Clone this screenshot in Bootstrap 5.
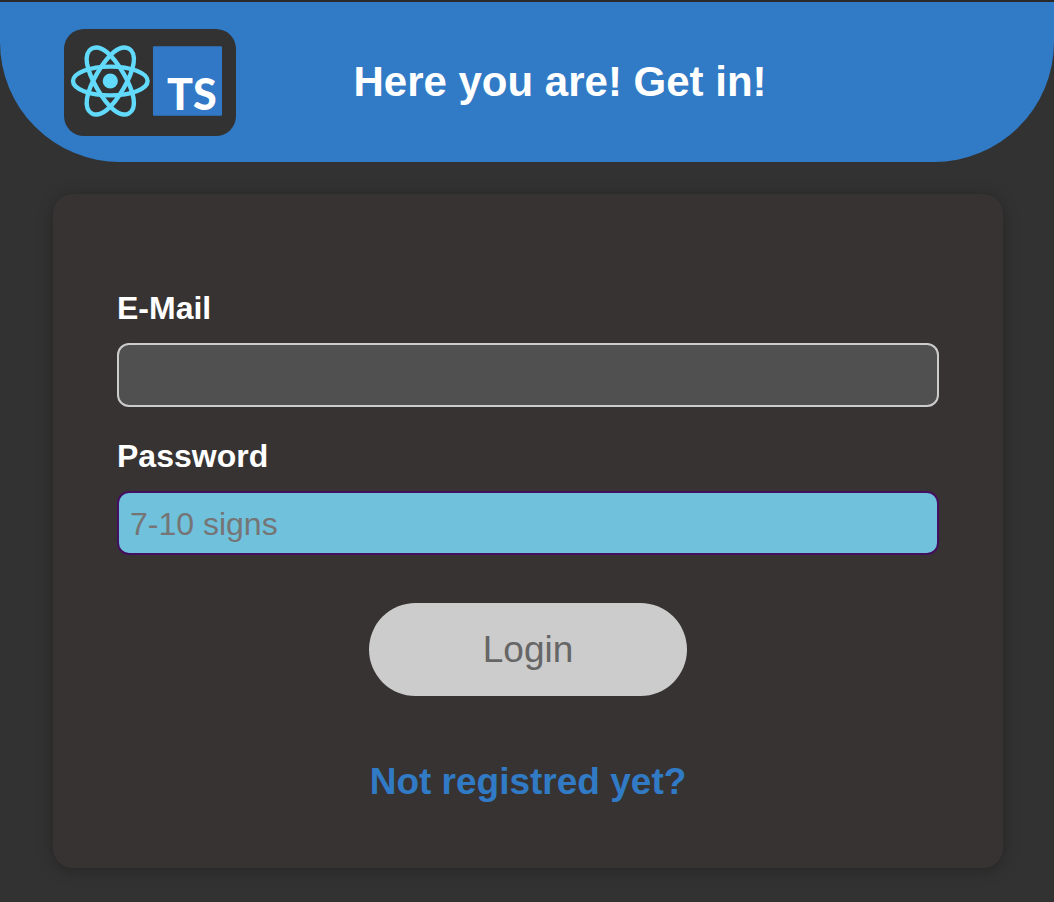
<!DOCTYPE html>
<html lang="en" data-bs-theme="dark">
<head>
<meta charset="utf-8">
<meta name="viewport" content="width=device-width, initial-scale=1">
<title>Login</title>
<link href="https://cdn.jsdelivr.net/npm/bootstrap@5.3.0/dist/css/bootstrap.min.css" rel="stylesheet">
<style>
  body { background: #323232; color: #fff; font-family: "Liberation Sans", Arial, sans-serif; }
  .site-header { background: #317bc6; border-radius: 0 0 120px 120px; min-height: 160px; padding: 0 170px 0 64px; }
  .top-line { height: 2px; background: #2a2a2a; }
  .brand { background: #323232; border-radius: 20px; line-height: 0; }
  .site-title { font-size: 42px; line-height: 48px; }
  .page-main { padding: 32px 51px 32px 53px; }
  .login-card { background: #373332; border: 0; border-radius: 20px; padding: 96px 64px 64px; box-shadow: 0 2px 16px rgba(0, 0, 0, .26); color: #fff; }
  .field-stack { display: grid; gap: 31px; }
  .field-label { font-size: 32px; line-height: 37px; margin-bottom: 16px; }
  .field { height: 64px; border: 2px solid #ccc; border-radius: 12px; background: #505050; color: #fff; font-size: 32px; line-height: 38px; padding: 12px 11px 10px; }
  .field:focus { background: #505050; color: #fff; }
  .field-invalid, .field-invalid:focus { background: #70c1dc; border-color: #43105f; color: #323232; }
  .field::placeholder { color: #757575; opacity: 1; }
  .btn-login, .btn-login:disabled { width: 318px; height: 93px; border: 0; background: #ccc; color: #666; font-size: 37px; line-height: 44px; opacity: 1; }
  .register-link { color: #317bc6; font-size: 37px; line-height: 44px; }
</style>
</head>
<body>
<div class="top-line"></div>
<header class="site-header d-flex align-items-center">
  <a class="brand flex-shrink-0" href="#" aria-label="Home">
    <svg width="172" height="107" viewBox="0 0 172 107" aria-hidden="true">
      <g fill="none" stroke="#61dafb" stroke-width="4.4" transform="translate(46.3 52)">
        <ellipse rx="37.3" ry="14.4"/>
        <path transform="rotate(60)" d="M-37.3 0C-37.3-10-22-15.2 0-15.2S37.3-10 37.3 0 22 15.2 0 15.2-37.3 10-37.3 0Z"/>
        <path transform="rotate(120)" d="M-37.3 0C-37.3-10-22-15.2 0-15.2S37.3-10 37.3 0 22 15.2 0 15.2-37.3 10-37.3 0Z"/>
      </g>
      <circle cx="46.3" cy="52" r="7.6" fill="#61dafb"/>
      <rect x="89" y="17.3" width="69" height="69.4" rx="1" fill="#3178c6"/>
      <text x="103" y="81" fill="#fff" font-family="Lato, sans-serif" font-weight="900" font-size="43">TS</text>
    </svg>
  </a>
  <h1 class="site-title flex-fill text-center fw-bold mb-0">Here you are! Get in!</h1>
</header>
<main class="page-main">
  <form class="login-card card">
    <div class="field-stack">
      <div>
        <label class="field-label d-block fw-bold" for="email">E-Mail</label>
        <input class="field form-control" type="email" id="email">
      </div>
      <div>
        <label class="field-label d-block fw-bold" for="password">Password</label>
        <input class="field field-invalid form-control" type="password" id="password" placeholder="7-10 signs">
      </div>
    </div>
    <button class="btn btn-login rounded-pill align-self-center mt-5" type="submit" disabled>Login</button>
    <div class="text-center mt-5 pt-3">
      <a class="register-link d-inline-block fw-bold text-decoration-none align-top" href="#">Not registred yet?</a>
    </div>
  </form>
</main>
<script src="https://cdn.jsdelivr.net/npm/bootstrap@5.3.0/dist/js/bootstrap.bundle.min.js"></script>
</body>
</html>
